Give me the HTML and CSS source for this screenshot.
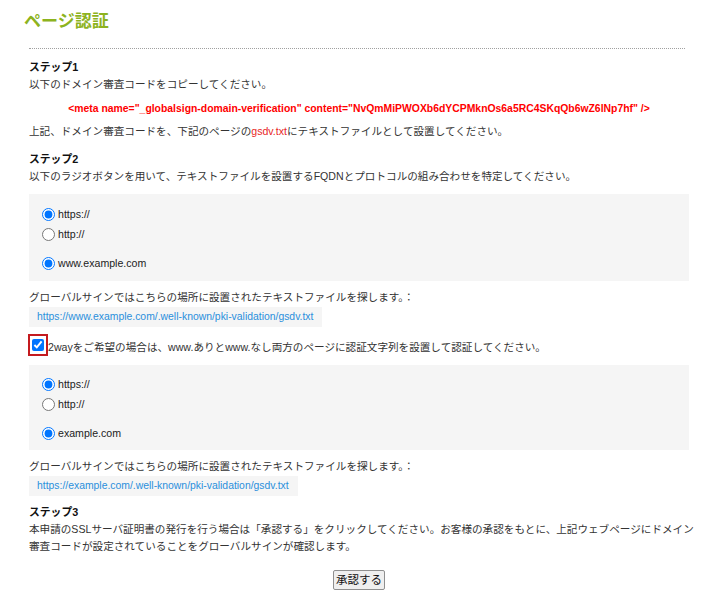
FILE: index.html
```html
<!DOCTYPE html>
<html lang="ja">
<head>
<meta charset="utf-8">
<title>ページ認証</title>
<link rel="stylesheet" href="styles.css">
</head>
<body>
<div class="page">
  <h1 class="title">ページ認証</h1>
  <div class="rule"></div>

  <section class="step first">
    <h2 class="step-title">ステップ1</h2>
    <p class="text">以下のドメイン審査コードをコピーしてください。</p>
    <p class="meta">&lt;meta name="_globalsign-domain-verification" content="NvQmMiPWOXb6dYCPMknOs6a5RC4SKqQb6wZ6lNp7hf" /&gt;</p>
    <p class="text">上記、ドメイン審査コードを、下記のページの<span class="file">gsdv.txt</span>にテキストファイルとして設置してください。</p>
  </section>

  <section class="step">
    <h2 class="step-title">ステップ2</h2>
    <p class="text">以下のラジオボタンを用いて、テキストファイルを設置するFQDNとプロトコルの組み合わせを特定してください。</p>
    <div class="choice-box">
      <label class="row"><input type="radio" name="p1" checked><span>https://</span></label>
      <label class="row"><input type="radio" name="p1"><span>http://</span></label>
      <label class="row domain"><input type="radio" name="d1" checked><span>www.example.com</span></label>
    </div>
    <p class="text after-box">グローバルサインではこちらの場所に設置されたテキストファイルを探します。：</p>
    <div class="url-box">https://www.example.com/.well-known/pki-validation/gsdv.txt</div>

    <label class="twoway"><span class="redbox"><input type="checkbox" checked></span><span>2wayをご希望の場合は、www.ありとwww.なし両方のページに認証文字列を設置して認証してください。</span></label>

    <div class="choice-box second">
      <label class="row"><input type="radio" name="p2" checked><span>https://</span></label>
      <label class="row"><input type="radio" name="p2"><span>http://</span></label>
      <label class="row domain"><input type="radio" name="d2" checked><span>example.com</span></label>
    </div>
    <p class="text after-box">グローバルサインではこちらの場所に設置されたテキストファイルを探します。：</p>
    <div class="url-box">https://example.com/.well-known/pki-validation/gsdv.txt</div>
  </section>

  <section class="step third">
    <h2 class="step-title">ステップ3</h2>
    <p class="text wide">本申請のSSLサーバ証明書の発行を行う場合は「承認する」をクリックしてください。お客様の承認をもとに、上記ウェブページにドメイン<br>審査コードが設定されていることをグローバルサインが確認します。</p>
  </section>

  <div class="actions"><button type="button" class="approve">承認する</button></div>
</div>
</body>
</html>
```

FILE: styles.css
```css
html, body {
  margin: 0;
  padding: 0;
  background: #ffffff;
}

body {
  font-family: "Liberation Sans", Arial, "Noto Sans CJK JP", sans-serif;
  font-size: 10.6px;
  line-height: 17px;
  color: #333333;
}

.page {
  width: 660px;
  padding: 10px 0 0 29px;
}

.title {
  margin: 0 0 0 -5px;
  font-size: 17px;
  line-height: 24px;
  font-weight: bold;
  color: #8db31e;
}

.rule {
  margin: 14px 4px 0 0;
  border-top: 1px dotted #a0a0a0;
}

.step {
  margin-top: 11px;
}

.step.first {
  margin-top: 10px;
}

.step.third {
  margin-top: 8px;
}

.step-title {
  margin: 0;
  font-size: 10.8px;
  line-height: 17px;
  font-weight: bold;
  color: #111111;
}

.text {
  margin: 0;
}

.text.wide {
  margin-right: -20px;
}

.meta {
  margin: 7px 0 6px;
  text-align: center;
  color: #ff0000;
  font-weight: bold;
  font-size: 10.4px;
}

.file {
  color: #e8271f;
}

.choice-box {
  margin-top: 9px;
  background: #f5f5f5;
  padding: 10px 0 8px 13px;
  display: flex;
  flex-direction: column;
}

.choice-box.second {
  margin-top: 9px;
  padding-top: 9px;
  padding-bottom: 7px;
}

.row {
  display: flex;
  align-items: center;
  gap: 3px;
  height: 20px;
  color: #222222;
}

.row.domain {
  margin-top: 9px;
}

.row input {
  margin: 0;
  width: 13px;
  height: 13px;
}

.after-box {
  margin-top: 8px;
}

.url-box {
  display: inline-block;
  margin-top: 1px;
  background: #f5f5f5;
  padding: 0 9px 0 8px;
  line-height: 20px;
  font-size: 10.4px;
  color: #2a8fdc;
}

.twoway {
  display: flex;
  align-items: center;
  margin-top: 7px;
  margin-left: -1px;
}

.redbox {
  display: inline-flex;
  align-items: center;
  justify-content: center;
  width: 16px;
  height: 18px;
  border: 2px solid #c41a1f;
}

.redbox input {
  margin: 0;
  width: 12px;
  height: 12px;
}

.twoway span + span {
  margin-top: 4px;
}

.actions {
  margin-top: 15px;
  display: flex;
  justify-content: center;
}

.approve {
  font-family: "Liberation Sans", Arial, "Noto Sans CJK JP", sans-serif;
  font-size: 11.5px;
  line-height: 18px;
  padding: 0 2px;
  background: #efefef;
  border: 1px solid #8f8f8f;
  border-radius: 2px;
  color: #111111;
}
```
